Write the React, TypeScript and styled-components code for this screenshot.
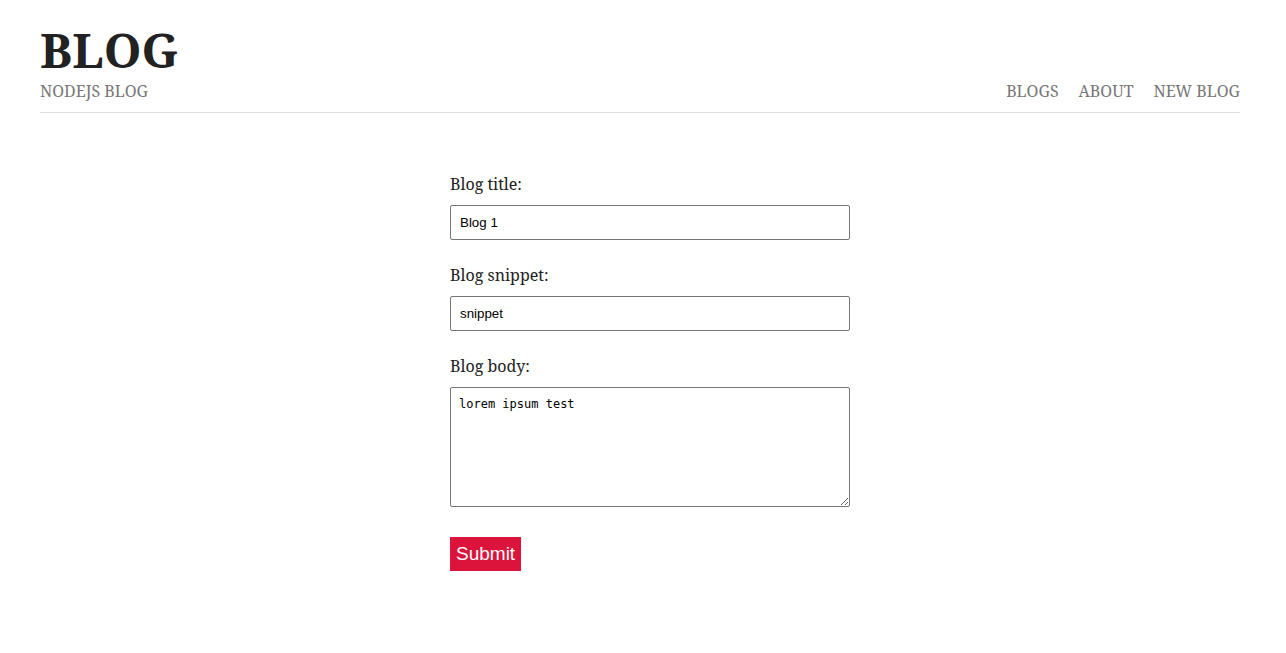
import React from "react";
import styled, { createGlobalStyle } from "styled-components";

const Global = createGlobalStyle`
  html, body { margin: 0; padding: 0; background: #fff; }
  body { font-family: "Noto Serif", "Liberation Serif", serif; color: #222; }
`;

const Header = styled.header`
  margin: 0 46px 0 40px;
  padding-top: 20px;
  border-bottom: 1px solid #ddd;
  display: flex;
  justify-content: space-between;
  align-items: flex-end;
`;

const Brand = styled.div`
  display: flex;
  flex-direction: column;
`;

const Title = styled.h1`
  margin: 0;
  font-size: 48px;
  font-weight: 700;
  line-height: 60px;
  color: #222;
`;

const Subtitle = styled.p`
  margin: 0 0 10px;
  font-size: 16px;
  line-height: 22px;
  color: #777;
`;

const Nav = styled.nav`
  display: flex;
  gap: 20px;
  margin-bottom: 10px;
`;

const NavLink = styled.a`
  font-size: 16px;
  line-height: 22px;
  color: #777;
  text-decoration: none;
`;

const Content = styled.main`
  padding-left: 14px;
`;

const Form = styled.form`
  width: 400px;
  margin: 60px auto 0;
  display: flex;
  flex-direction: column;
`;

const Label = styled.label`
  font-size: 16px;
  line-height: 22px;
  color: #222;
  margin-bottom: 10px;
`;

const Input = styled.input`
  box-sizing: border-box;
  width: 400px;
  height: 35px;
  padding: 6px 9px;
  border: 1px solid #767676;
  border-radius: 2px;
  font-family: "Liberation Sans", Arial, sans-serif;
  font-size: 13.33px;
  color: #000;
  margin-bottom: 24px;
  outline: none;
`;

const TextArea = styled.textarea`
  box-sizing: border-box;
  width: 400px;
  height: 120px;
  padding: 8px 8px;
  border: 1px solid #767676;
  border-radius: 2px;
  font-family: "DejaVu Sans Mono", "Liberation Mono", monospace;
  font-size: 12px;
  line-height: 16px;
  color: #000;
  margin-bottom: 30px;
  outline: none;
`;

const Submit = styled.button`
  align-self: flex-start;
  background: #dc143c;
  color: #fff;
  border: none;
  border-radius: 0;
  font-family: "Liberation Sans", Arial, sans-serif;
  font-size: 19px;
  height: 34px;
  padding: 0 6px;
  cursor: pointer;
`;

export default function App() {
  return (
    <>
      <Global />
      <Header>
        <Brand>
          <Title>BLOG</Title>
          <Subtitle>NODEJS BLOG</Subtitle>
        </Brand>
        <Nav>
          <NavLink href="#">BLOGS</NavLink>
          <NavLink href="#">ABOUT</NavLink>
          <NavLink href="#">NEW BLOG</NavLink>
        </Nav>
      </Header>
      <Content>
        <Form onSubmit={(e) => e.preventDefault()}>
          <Label htmlFor="title">Blog title:</Label>
          <Input id="title" type="text" defaultValue="Blog 1" />
          <Label htmlFor="snippet">Blog snippet:</Label>
          <Input id="snippet" type="text" defaultValue="snippet" />
          <Label htmlFor="body">Blog body:</Label>
          <TextArea id="body" defaultValue="lorem ipsum test" />
          <Submit type="submit">Submit</Submit>
        </Form>
      </Content>
    </>
  );
}
